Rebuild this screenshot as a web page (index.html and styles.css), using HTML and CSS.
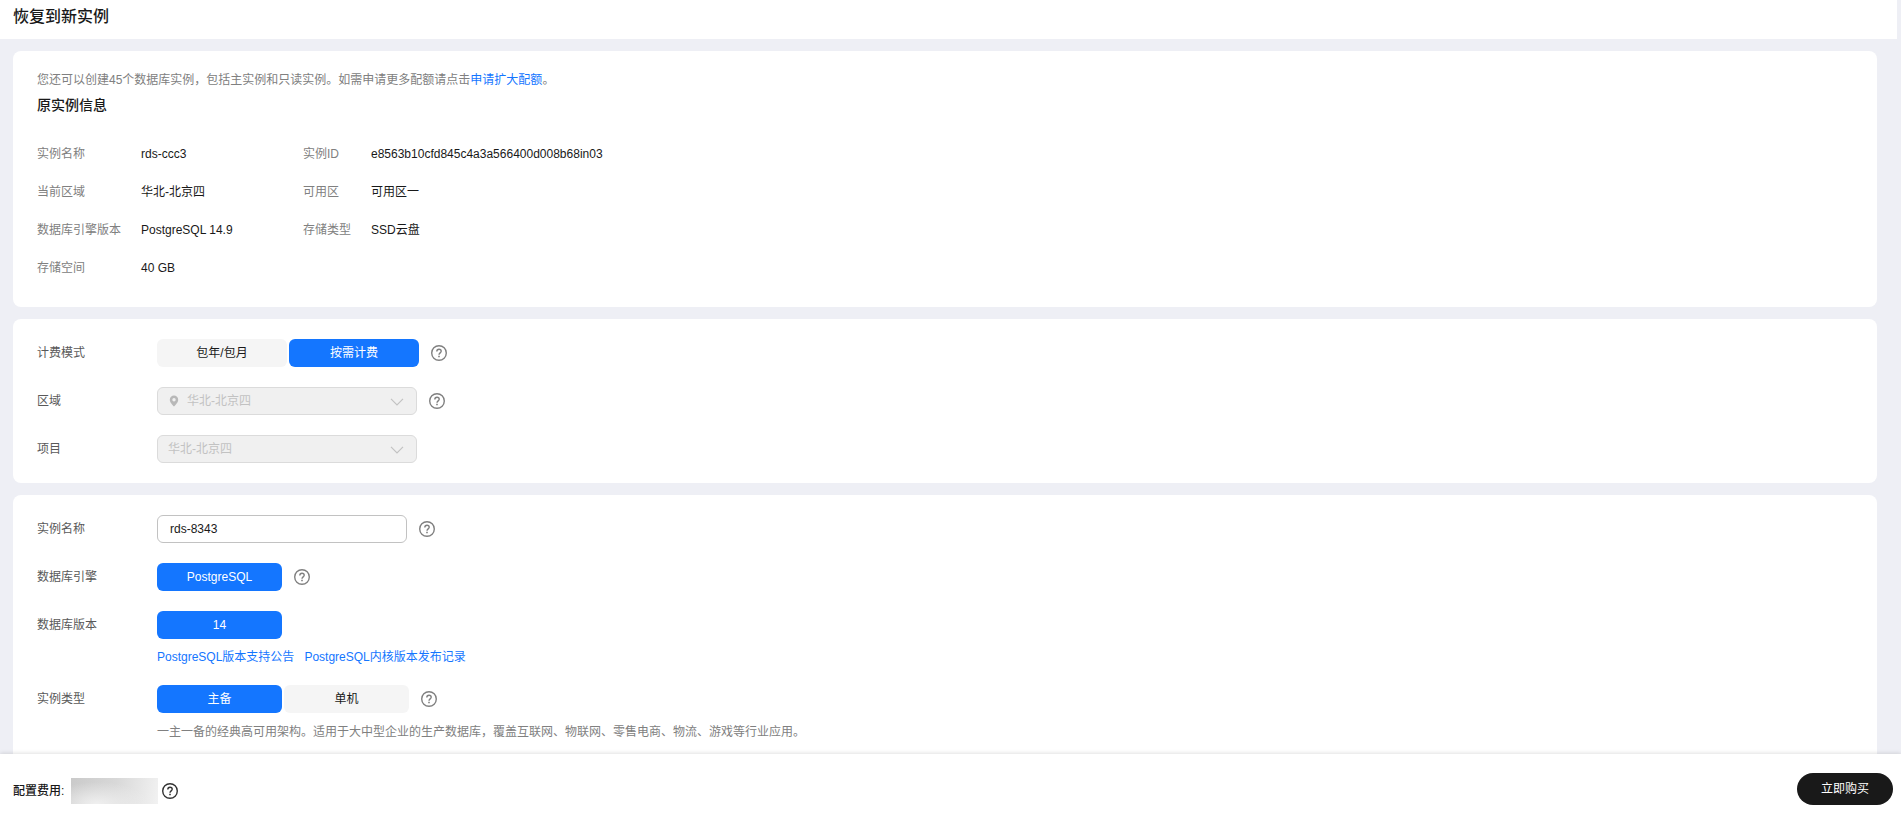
FILE: index.html
```html
<!DOCTYPE html>
<html lang="zh-CN">
<head>
<meta charset="utf-8">
<title>恢复到新实例</title>
<link rel="stylesheet" href="styles.css">
</head>
<body>
<svg class="sprite" aria-hidden="true">
  <symbol id="help" viewBox="0 0 16 16">
    <circle cx="8" cy="8" r="7.3" fill="none" stroke="currentColor" stroke-width="1.4"/>
    <path d="M5.8 6.4C5.8 5 6.7 4.2 8 4.2s2.2.8 2.2 2c0 1.6-2.2 1.7-2.2 3.5" fill="none" stroke="currentColor" stroke-width="1.4"/>
    <path d="M7.2 10.7h1.6v1.5H7.2z" fill="currentColor"/>
  </symbol>
  <symbol id="chevron" viewBox="0 0 14 8">
    <path d="M1 .8l6 6 6-6" fill="none" stroke="currentColor" stroke-width="1.2"/>
  </symbol>
  <symbol id="pin" viewBox="0 0 10 12">
    <path d="M5 .5a4.2 4.2 0 0 0-4.2 4.2C.8 7.4 3.6 10 5 11.5 6.400 10 9.200 7.400 9.200 4.700A4.200 4.200 0 0 0 5 .5zm0 2.600a1.700 1.700 0 1 1 0 3.400 1.700 1.700 0 0 1 0-3.400z" fill="currentColor" fill-rule="evenodd"/>
  </symbol>
</svg>

<div class="page">
  <header class="page-header"><h1 class="page-title">恢复到新实例</h1></header>

  <main class="content">
    <section class="card card-info">
      <p class="quota">您还可以创建45个数据库实例，包括主实例和只读实例。如需申请更多配额请点击<a class="link" href="#">申请扩大配额</a>。</p>
      <h2 class="card-title">原实例信息</h2>
      <dl class="info">
        <dt>实例名称</dt><dd>rds-ccc3</dd><dt>实例ID</dt><dd>e8563b10cfd845c4a3a566400d008b68in03</dd>
        <dt>当前区域</dt><dd>华北-北京四</dd><dt>可用区</dt><dd>可用区一</dd>
        <dt>数据库引擎版本</dt><dd>PostgreSQL 14.9</dd><dt>存储类型</dt><dd>SSD云盘</dd>
        <dt>存储空间</dt><dd>40 GB</dd>
      </dl>
    </section>

    <section class="card form">
      <div class="row">
        <span class="label" id="billing">计费模式</span>
        <div class="control">
          <div class="segments" role="group" aria-labelledby="billing">
            <button class="segment wide" type="button">包年/包月</button>
            <button class="segment wide selected" type="button">按需计费</button>
          </div>
          <button class="help" type="button" aria-label="帮助"><svg><use href="#help"/></svg></button>
        </div>
      </div>
      <div class="row">
        <label class="label" for="region">区域</label>
        <div class="control">
          <div class="select-box">
            <svg class="pin"><use href="#pin"/></svg>
            <select class="select with-pin" id="region" disabled><option>华北-北京四</option></select>
            <svg class="chevron"><use href="#chevron"/></svg>
          </div>
          <button class="help" type="button" aria-label="帮助"><svg><use href="#help"/></svg></button>
        </div>
      </div>
      <div class="row">
        <label class="label" for="project">项目</label>
        <div class="control">
          <div class="select-box">
            <select class="select" id="project" disabled><option>华北-北京四</option></select>
            <svg class="chevron"><use href="#chevron"/></svg>
          </div>
        </div>
      </div>
    </section>

    <section class="card form">
      <div class="row">
        <label class="label" for="name">实例名称</label>
        <div class="control">
          <input class="input" id="name" type="text" value="rds-8343">
          <button class="help" type="button" aria-label="帮助"><svg><use href="#help"/></svg></button>
        </div>
      </div>
      <div class="row">
        <span class="label" id="engine">数据库引擎</span>
        <div class="control">
          <div class="segments" role="group" aria-labelledby="engine">
            <button class="segment selected" type="button">PostgreSQL</button>
          </div>
          <button class="help" type="button" aria-label="帮助"><svg><use href="#help"/></svg></button>
        </div>
      </div>
      <div class="row">
        <span class="label" id="version">数据库版本</span>
        <div class="field">
          <div class="segments" role="group" aria-labelledby="version">
            <button class="segment selected" type="button">14</button>
          </div>
          <div class="links">
            <a class="link" href="#">PostgreSQL版本支持公告</a>
            <a class="link" href="#">PostgreSQL内核版本发布记录</a>
          </div>
        </div>
      </div>
      <div class="row">
        <span class="label" id="type">实例类型</span>
        <div class="field">
          <div class="control">
            <div class="segments" role="group" aria-labelledby="type">
              <button class="segment selected" type="button">主备</button>
              <button class="segment" type="button">单机</button>
            </div>
            <button class="help" type="button" aria-label="帮助"><svg><use href="#help"/></svg></button>
          </div>
          <p class="hint">一主一备的经典高可用架构。适用于大中型企业的生产数据库，覆盖互联网、物联网、零售电商、物流、游戏等行业应用。</p>
        </div>
      </div>
    </section>
  </main>

  <footer class="footer">
    <span class="price-label">配置费用:</span>
    <span class="price"></span>
    <button class="help dark" type="button" aria-label="帮助"><svg><use href="#help"/></svg></button>
    <button class="buy" type="button">立即购买</button>
  </footer>
</div>
</body>
</html>
```
FILE: styles.css
```css
* {
  box-sizing: border-box;
}

body {
  margin: 0;
  background: #eeeff5;
  color: #191919;
  font: 12px/18px "Liberation Sans", Arial, "Noto Sans CJK SC", sans-serif;
}

h1, h2, p, dl, dd {
  margin: 0;
}

button, input, select {
  font: inherit;
}

.sprite {
  display: none;
}

.page {
  display: flex;
  flex-direction: column;
  height: 100vh;
}

.page-header {
  margin-right: 4px;
  padding: 5px 13px 10px;
  background: #fff;
}

.page-title {
  font-size: 16px;
  line-height: 24px;
  font-weight: 500;
}

.content {
  flex: 1;
  min-height: 0;
  display: flex;
  flex-direction: column;
  gap: 12px;
  padding: 12px 24px 12px 13px;
  overflow-y: auto;
  scrollbar-width: none;
}

.card {
  flex: none;
  padding: 20px 24px;
  border-radius: 8px;
  background: #fff;
}

.card-info {
  padding-bottom: 30px;
}

.quota {
  color: #808080;
}

.link {
  color: #1476ff;
  text-decoration: none;
}

.card-title {
  margin-top: 6px;
  font-size: 14px;
  line-height: 20px;
  font-weight: 500;
}

.info {
  display: grid;
  grid-template-columns: 104px 162px 68px 1fr;
  row-gap: 20px;
  margin-top: 30px;
}

.info dt {
  color: #808080;
}

.form {
  display: flex;
  flex-direction: column;
  gap: 20px;
}

.row {
  display: flex;
}

.label {
  width: 120px;
  line-height: 28px;
  color: #595959;
}

.control {
  display: flex;
  align-items: center;
  gap: 12px;
}

.segments {
  display: flex;
  gap: 2px;
}

.segment {
  width: 125px;
  height: 28px;
  padding: 0;
  border: 0;
  border-radius: 6px;
  background: #f5f5f5;
  color: #191919;
}

.segment.wide {
  width: 130px;
}

.segment.selected {
  background: #1476ff;
  color: #fff;
}

.help {
  display: flex;
  padding: 0;
  border: 0;
  background: none;
  color: #808080;
}

.help svg {
  width: 16px;
  height: 16px;
}

.help.dark {
  color: #333;
}

.select-box {
  position: relative;
}

.select {
  display: block;
  width: 260px;
  height: 28px;
  padding: 0 30px 0 10px;
  border: 1px solid #dbdbdb;
  border-radius: 6px;
  appearance: none;
  background: #f0f0f0;
  color: #c2c2c2;
  opacity: 1;
}

.select.with-pin {
  padding-left: 29px;
}

.pin {
  position: absolute;
  top: 8px;
  left: 12px;
  width: 10px;
  height: 12px;
  color: #b8b8b8;
}

.chevron {
  position: absolute;
  top: 11px;
  right: 13px;
  width: 14px;
  height: 8px;
  color: #c2c2c2;
}

.input {
  width: 250px;
  height: 28px;
  padding: 0 12px;
  border: 1px solid #c2c2c2;
  border-radius: 6px;
  background: #fff;
  color: #191919;
}

.links {
  display: flex;
  gap: 10px;
  margin-top: 10px;
  line-height: 16px;
}

.hint {
  margin-top: 10px;
  color: #808080;
}

.footer {
  position: relative;
  display: flex;
  align-items: center;
  padding: 19px 8px 10px 13px;
  background: #fff;
  box-shadow: 0 -1px 4px rgba(0, 0, 0, 0.12);
}

.price-label {
  font-weight: 500;
}

.price {
  width: 87px;
  height: 26px;
  margin: 0 4px 0 7px;
  background:
    radial-gradient(ellipse at 30% 100%, #f0f0f0, transparent 60%),
    linear-gradient(100deg, #cacaca, #d8d8d8 50%, #f2f2f2);
}

.buy {
  height: 32px;
  margin: 0 0 4px auto;
  padding: 0 24px;
  border: 0;
  border-radius: 16px;
  background: #191919;
  color: #fff;
}
```
